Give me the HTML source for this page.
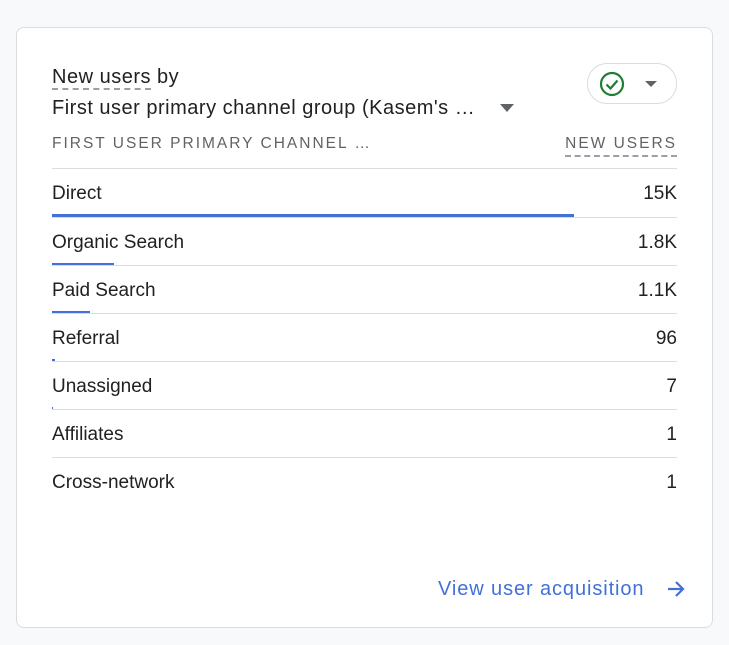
<!DOCTYPE html>
<html><head><style>
body{margin:0;width:729px;height:645px;background:#f8f9fa;font-family:"Liberation Sans",sans-serif;position:relative;overflow:hidden}
.card{position:absolute;left:16px;top:27px;width:697px;height:601px;background:#fff;border:1px solid #dadce0;border-radius:8px;box-sizing:border-box}
.a{position:absolute;white-space:nowrap}
.t{font-size:20px;color:#202124;letter-spacing:0.5px}
.row{position:absolute;left:52px;width:625px;height:48px;border-top:1px solid #dadce0}
.row .n{position:absolute;left:0;top:14px;font-size:19px;color:#202124}
.row .v{position:absolute;right:0;top:14px;font-size:19px;color:#202124}
.row .b{position:absolute;left:0;top:45px;height:3px;background:#4170d8}
</style></head><body>
<div class="card"></div>
<div class="a t" style="left:52px;top:66px"><span style="border-bottom:2px dashed #9aa0a6">New users</span> by</div>
<div class="a t" style="left:52px;top:97px">First user primary channel group (Kasem's …</div>
<svg class="a" style="left:499px;top:103px" width="16" height="10"><path d="M1 1h14l-7 8z" fill="#5f6368"/></svg>
<div class="a" style="left:587px;top:63px;width:90px;height:41px;border:1px solid #dadce0;border-radius:20px;box-sizing:border-box"></div>
<svg class="a" style="left:599px;top:71px" width="26" height="26"><circle cx="13" cy="13" r="11" fill="none" stroke="#1e7e34" stroke-width="2.2"/><path d="M7.5 13.5l4 4 7-8" fill="none" stroke="#1e7e34" stroke-width="2.2"/></svg>
<svg class="a" style="left:644px;top:80px" width="14" height="8"><path d="M1 1h12l-6 6z" fill="#5f6368"/></svg>
<div class="a" style="left:52px;top:135px;font-size:15.5px;letter-spacing:2px;color:#5f6368">FIRST USER PRIMARY CHANNEL …</div>
<div class="a" style="right:52px;top:135px;font-size:15.5px;letter-spacing:2px;color:#5f6368;border-bottom:2px dashed #9aa0a6;padding-bottom:2px">NEW USERS</div>
<div class="row" style="top:168px"><span class="n">Direct</span><span class="v">15K</span><div class="b" style="width:522px"></div></div>
<div class="row" style="top:217px"><span class="n">Organic Search</span><span class="v">1.8K</span><div class="b" style="width:62px"></div></div>
<div class="row" style="top:265px"><span class="n">Paid Search</span><span class="v">1.1K</span><div class="b" style="width:38px"></div></div>
<div class="row" style="top:313px"><span class="n">Referral</span><span class="v">96</span><div class="b" style="width:3px"></div></div>
<div class="row" style="top:361px"><span class="n">Unassigned</span><span class="v">7</span><div class="b" style="width:1px"></div></div>
<div class="row" style="top:409px"><span class="n">Affiliates</span><span class="v">1</span></div>
<div class="row" style="top:457px"><span class="n">Cross-network</span><span class="v">1</span></div>
<div class="a" style="left:438px;top:578px;font-size:20px;letter-spacing:0.9px;color:#4170d8">View user acquisition</div>
<svg class="a" style="left:666px;top:579px" width="20" height="20"><path d="M2 10h15M10 3l7 7-7 7" fill="none" stroke="#4170d8" stroke-width="2.2"/></svg>
</body></html>
